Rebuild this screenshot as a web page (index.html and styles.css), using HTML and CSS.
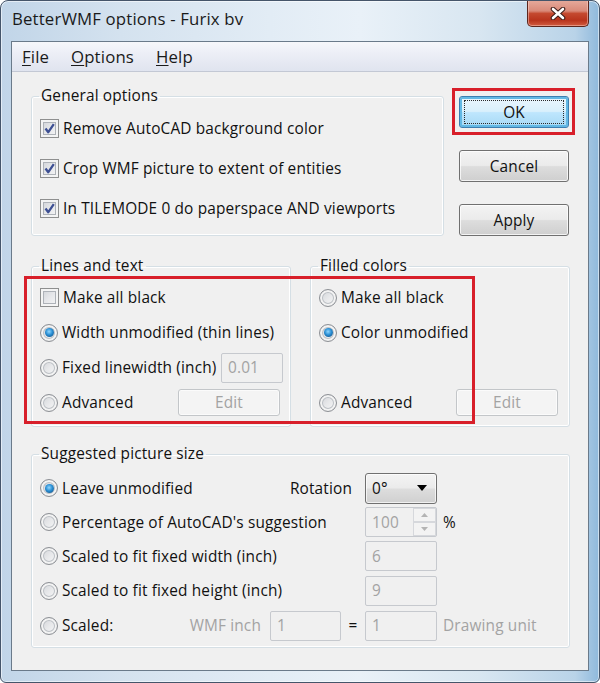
FILE: index.html
```html
<!DOCTYPE html>
<html>
<head>
<meta charset="utf-8">
<link rel="stylesheet" href="styles.css">
</head>
<body>
<div class="window">
  <div class="titlebar">
    <span class="title">BetterWMF options - Furix bv</span>
    <div class="close">
      <svg width="16" height="13" viewBox="0 0 16 13"><path d="M3 2 L13 11 M13 2 L3 11" stroke="#3b1c18" stroke-width="4.6" stroke-linecap="round" fill="none"/><path d="M3 2 L13 11 M13 2 L3 11" stroke="#ffffff" stroke-width="2.6" stroke-linecap="round" fill="none"/></svg>
    </div>
  </div>
  <div class="client">
    <div class="menubar">
      <span class="menu m-file"><u>F</u>ile</span>
      <span class="menu m-options"><u>O</u>ptions</span>
      <span class="menu m-help"><u>H</u>elp</span>
    </div>
    <div class="content">
      <div class="top-row">
        <fieldset class="group general">
          <legend>General options</legend>
          <div class="row r40"><span class="check"><svg width="17" height="17" viewBox="0 0 17 17"><path d="M4.5 8.5 L7.3 12.2 L12.8 4.2" stroke="#3d4f93" stroke-width="2.3" fill="none" stroke-linejoin="round"/></svg></span><span class="lbl">Remove AutoCAD background color</span></div>
          <div class="row r40"><span class="check"><svg width="17" height="17" viewBox="0 0 17 17"><path d="M4.5 8.5 L7.3 12.2 L12.8 4.2" stroke="#3d4f93" stroke-width="2.3" fill="none" stroke-linejoin="round"/></svg></span><span class="lbl">Crop WMF picture to extent of entities</span></div>
          <div class="row r40"><span class="check"><svg width="17" height="17" viewBox="0 0 17 17"><path d="M4.5 8.5 L7.3 12.2 L12.8 4.2" stroke="#3d4f93" stroke-width="2.3" fill="none" stroke-linejoin="round"/></svg></span><span class="lbl">In TILEMODE 0 do paperspace AND viewports</span></div>
        </fieldset>
        <div class="buttons">
          <button class="btn btn-default"><span class="focus">OK</span></button>
          <button class="btn">Cancel</button>
          <button class="btn">Apply</button>
        </div>
      </div>
      <div class="mid-row">
        <fieldset class="group lines">
          <legend>Lines and text</legend>
          <div class="row r35"><span class="check"></span><span class="lbl">Make all black</span></div>
          <div class="row r35"><span class="radio"><span class="dot"></span></span><span class="lbl">Width unmodified (thin lines)</span></div>
          <div class="row r35"><span class="radio"></span><span class="lbl">Fixed linewidth (inch)</span><span class="tbox lw">0.01</span></div>
          <div class="row r35"><span class="radio"></span><span class="lbl">Advanced</span><button class="btn btn-off edit edit-l">Edit</button></div>
        </fieldset>
        <fieldset class="group filled">
          <legend>Filled colors</legend>
          <div class="row r35"><span class="radio"></span><span class="lbl">Make all black</span></div>
          <div class="row r35"><span class="radio"><span class="dot"></span></span><span class="lbl">Color unmodified</span></div>
          <div class="row r35"></div>
          <div class="row r35"><span class="radio"></span><span class="lbl">Advanced</span><button class="btn btn-off edit edit-r">Edit</button></div>
        </fieldset>
      </div>
      <fieldset class="group size">
        <legend>Suggested picture size</legend>
        <div class="size-grid">
          <div class="cell"><span class="radio"><span class="dot"></span></span><span class="lbl">Leave unmodified</span><span class="rot">Rotation</span></div>
          <div class="cell"><div class="combo"><span>0°</span><svg width="10" height="6" viewBox="0 0 10 6"><path d="M0 0 H10 L5 6 Z" fill="#000"/></svg></div></div>
          <div class="cell"></div>

          <div class="cell"><span class="radio"></span><span class="lbl">Percentage of AutoCAD's suggestion</span></div>
          <div class="cell"><div class="tbox spinbox"><span class="spin-val">100</span><span class="spin"><span class="spin-btn"><svg width="7" height="4" viewBox="0 0 7 4"><path d="M0 4 L3.5 0 L7 4 Z" fill="#b4b4b4"/></svg></span><span class="spin-btn"><svg width="7" height="4" viewBox="0 0 7 4"><path d="M0 0 L3.5 4 L7 0 Z" fill="#b4b4b4"/></svg></span></span></div></div>
          <div class="cell after">%</div>

          <div class="cell"><span class="radio"></span><span class="lbl">Scaled to fit fixed width (inch)</span></div>
          <div class="cell"><span class="tbox full">6</span></div>
          <div class="cell"></div>

          <div class="cell"><span class="radio"></span><span class="lbl">Scaled to fit fixed height (inch)</span></div>
          <div class="cell"><span class="tbox full">9</span></div>
          <div class="cell"></div>

          <div class="cell"><span class="radio"></span><span class="lbl">Scaled:</span><span class="wmf"><span class="grey">WMF inch</span><span class="tbox wmfbox">1</span><span class="eq">=</span></span></div>
          <div class="cell"><span class="tbox full">1</span></div>
          <div class="cell after grey">Drawing unit</div>
        </div>
      </fieldset>
    </div>
  </div>
  <div class="annot annot-ok"></div>
  <div class="annot annot-lines"></div>
</div>
</body>
</html>
```

FILE: styles.css
```css
html, body {
  margin: 0;
  padding: 0;
  background: #ffffff;
}

body {
  font-family: "Open Sans", "Noto Sans", sans-serif;
  font-size: 15.4px;
  letter-spacing: 0.15px;
  color: #111;
}

.window {
  position: relative;
  width: 600px;
  height: 683px;
  box-sizing: border-box;
  border: 1px solid #45556a;
  border-radius: 8px 8px 6px 6px;
  overflow: hidden;
  background: linear-gradient(90deg, #c1d5e8 0%, #d4e2ef 20%, #e2ecf5 45%, #e9f1f8 60%, #d8e6f1 80%, #b9d3e8 96%, #8fb9dc 100%);
  box-shadow: inset 0 0 0 1px rgba(255, 255, 255, 0.55);
}

.titlebar {
  height: 40px;
  display: flex;
  justify-content: space-between;
  align-items: flex-start;
}

.title {
  font-size: 16.8px;
  line-height: 22px;
  color: #1a1a1a;
  padding: 7px 0 0 11px;
}

.close {
  width: 62px;
  height: 27px;
  margin-top: -1px;
  margin-right: 10px;
  box-sizing: border-box;
  border: 1px solid #5c261d;
  border-top: none;
  border-radius: 0 0 5px 5px;
  display: flex;
  align-items: center;
  justify-content: center;
  background: linear-gradient(#e6ab9d 0%, #d98a79 42%, #c4492f 52%, #b8341d 78%, #d15c40 100%);
  box-shadow: inset 0 0 0 1px rgba(255, 220, 210, 0.45);
}

.client {
  margin: 0 10px;
  height: 630px;
  box-sizing: border-box;
  border: 1px solid #6a7a8a;
  background: #f0f0f0;
}

.menubar {
  height: 29px;
  border-bottom: 1px solid #c3c8d4;
  display: flex;
  align-items: center;
  padding-left: 10px;
  font-size: 16.8px;
  color: #1a1a1a;
  background: linear-gradient(#f6f7fb 0%, #eceef6 40%, #e0e4ef 100%);
}

.menu u {
  text-decoration-thickness: 1px;
  text-underline-offset: 2px;
}

.m-file { width: 49px; }
.m-options { width: 85px; }
.m-help { width: 50px; }

.content {
  padding: 15px 18px 0 19px;
}

.top-row {
  display: flex;
  gap: 15px;
}

.group {
  margin: 0;
  box-sizing: border-box;
  min-width: 0;
  border: 1px solid #d5dfe5;
  border-radius: 3px;
  box-shadow: inset 0 0 0 1px #ffffff;
  padding: 3px 7px 4px 8px;
}

.group legend {
  padding: 0 2px;
  margin-left: -1px;
  font-size: 15.4px;
  line-height: 18px;
  color: #111;
}

.general {
  width: 413px;
  padding-bottom: 1px;
}

.row {
  display: flex;
  align-items: center;
}

.r40 { height: 40px; }
.r35 { height: 35px; }

.lbl {
  margin-left: 4px;
  white-space: nowrap;
}

.check {
  width: 19px;
  height: 19px;
  flex: none;
  box-sizing: border-box;
  border: 1px solid #8e8f8f;
  background: linear-gradient(135deg, #cdd0d5 0%, #e6e7ea 50%, #f8f8f8 100%);
  box-shadow: inset 0 0 0 2px #f4f4f4, inset 0 0 0 3px #aeb2b8;
  display: flex;
  align-items: center;
  justify-content: center;
}

.radio {
  width: 18px;
  height: 18px;
  flex: none;
  box-sizing: border-box;
  border: 1px solid #8d9095;
  border-radius: 50%;
  background: linear-gradient(135deg, #cfd2d6 0%, #e7e8ea 50%, #f9f9f9 100%);
  box-shadow: inset 0 0 0 2px #f3f3f3, inset 0 0 0 3px #bcc0c5;
  display: flex;
  align-items: center;
  justify-content: center;
}

.dot {
  width: 9px;
  height: 9px;
  border-radius: 50%;
  background: radial-gradient(circle at 45% 40%, #8fd6ff 0%, #2a8fd4 45%, #0c3f70 100%);
}

.buttons {
  display: flex;
  flex-direction: column;
  gap: 22px;
  margin-top: 9px;
}

.btn {
  width: 110px;
  height: 32px;
  box-sizing: border-box;
  padding: 0;
  font-family: inherit;
  font-size: 15.4px;
  letter-spacing: 0.15px;
  color: #111;
  border: 1px solid #707070;
  border-radius: 3px;
  background: linear-gradient(#f3f3f3 0%, #ebebeb 48%, #dddddd 52%, #cfcfcf 100%);
  box-shadow: inset 0 0 0 1px rgba(255, 255, 255, 0.75);
  display: flex;
  align-items: center;
  justify-content: center;
}

.btn-default {
  border-color: #3c7fb1;
  background: linear-gradient(#eaf6fd 0%, #d9f0fc 48%, #bee6fd 52%, #a7d9f5 100%);
  box-shadow: inset 0 0 0 2px #62b8e4;
}

.focus {
  width: 100px;
  height: 24px;
  box-sizing: border-box;
  border: 1px dotted #2a2a2a;
  display: flex;
  align-items: center;
  justify-content: center;
}

.btn-off {
  color: #a3a3a3;
  border-color: #c3c6c9;
  background: #f4f4f4;
  box-shadow: inset 0 0 0 1px #fbfbfb;
}

.edit {
  width: 102px;
  height: 27px;
  margin-left: auto;
}

.edit-l { margin-right: 3px; }
.edit-r { margin-right: 4px; }

.mid-row {
  display: flex;
  gap: 19px;
  margin-top: 21px;
}

.lines, .filled {
  width: 260px;
  padding-top: 5px;
  padding-bottom: 6px;
}

.tbox {
  height: 30px;
  box-sizing: border-box;
  border: 1px solid #c6c9ce;
  border-radius: 2px;
  background: #f0f0f0;
  color: #a3a3a3;
  padding-left: 6px;
  display: flex;
  align-items: center;
}

.lw {
  width: 62px;
  margin-left: auto;
}

.size {
  width: 539px;
  margin-top: 18px;
  padding-top: 8px;
  padding-bottom: 4px;
}

.size-grid {
  display: grid;
  grid-template-columns: 325px 72px 1fr;
  grid-template-rows: 34px 34px 34px 35px 35px;
}

.cell {
  display: flex;
  align-items: center;
  white-space: nowrap;
}

.rot {
  margin-left: auto;
  margin-right: 13px;
}

.combo {
  width: 72px;
  height: 31px;
  box-sizing: border-box;
  border: 1px solid #707070;
  border-radius: 3px;
  background: linear-gradient(#f3f3f3 0%, #ebebeb 48%, #dddddd 52%, #d0d0d0 100%);
  box-shadow: inset 0 0 0 1px rgba(255, 255, 255, 0.7);
  display: flex;
  align-items: center;
  justify-content: space-between;
  padding: 0 9px 0 6px;
  color: #111;
}

.spinbox {
  width: 72px;
  padding-right: 0;
}

.spin-val { flex: 1; }

.spin {
  width: 23px;
  height: 28px;
  display: flex;
  flex-direction: column;
}

.spin-btn {
  flex: 1;
  box-sizing: border-box;
  border: 1px solid #d6d8dc;
  background: #f3f3f3;
  display: flex;
  align-items: center;
  justify-content: center;
}

.full { width: 72px; }

.after { padding-left: 6px; }

.grey { color: #a3a3a3; }

.wmf {
  margin-left: auto;
  display: flex;
  align-items: center;
}

.wmfbox {
  width: 71px;
  margin-left: 9px;
}

.eq {
  width: 24px;
  text-align: center;
  color: #111;
}

.annot {
  position: absolute;
  box-sizing: border-box;
  border: 3px solid #d81f2a;
}

.annot-ok {
  left: 451px;
  top: 87px;
  width: 123px;
  height: 47px;
}

.annot-lines {
  left: 23px;
  top: 275px;
  width: 451px;
  height: 148px;
}
```
